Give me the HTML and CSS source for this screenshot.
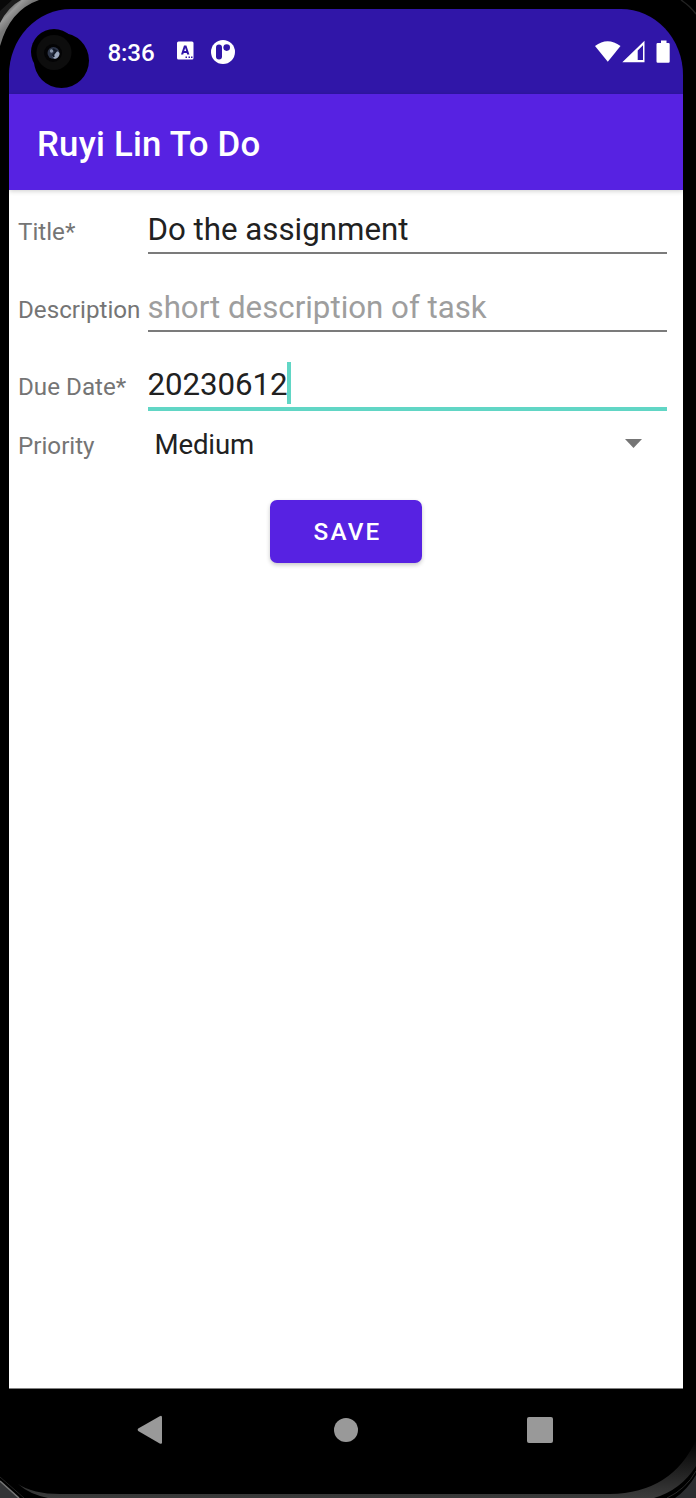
FILE: index.html
```html
<!DOCTYPE html>
<html lang="en">
<head>
<meta charset="utf-8">
<title>Ruyi Lin To Do</title>
<link rel="stylesheet" href="styles.css">
</head>
<body>
<div class="device">
  <svg class="bezel" width="696" height="1498" viewBox="0 0 696 1498" fill="none">
    <defs>
      <linearGradient id="edge" gradientUnits="userSpaceOnUse" x1="7" y1="7" x2="17" y2="17"><stop offset="0" stop-color="#555"/><stop offset=".45" stop-color="#999"/><stop offset="1" stop-color="#777"/></linearGradient>
      <linearGradient id="lip" x1="0" y1="0" x2="0" y2="1"><stop offset="0" stop-color="#000"/><stop offset="1" stop-color="#3c3c3c"/></linearGradient>
    </defs>
    <path d="M0 0H39Q10 10 0 46Z" fill="url(#edge)"/>
    <path d="M0 0H21Q8 7 0 23Z" fill="#1c1c1c"/>
    <path d="M0 0H12L0 11Z" fill="#080808"/>
    <path d="M681 0Q690 6 696 14" stroke="#222" stroke-width="1.5"/>
    <path d="M0 1481L19 1498H0Z" fill="#333436"/>
    <path d="M0 1481L19 1498" stroke="#777" stroke-width="1.5"/>
    <path d="M0 1477L24 1498" stroke="#222" stroke-width="1"/>
    <path d="M18 1484Q33 1494 60 1494H610Q672 1493 696 1440V1466Q681 1490 654 1498H48Q29 1494 18 1484Z" fill="url(#lip)"/>
    <path d="M696 1475Q687 1490 675 1498H696Z" fill="#2c2d30"/>
    <path d="M696 1471Q686 1489 667 1498" stroke="#2a2a2a" stroke-width="1"/>
  </svg>
  <main class="screen">
    <div class="statusbar">
      <svg class="camera" width="60" height="60" viewBox="0 0 60 60">
        <circle cx="31.500" cy="31.500" r="27.500"/><circle cx="24" cy="23" r="23"/>
        <circle cx="24" cy="23.500" r="17.500" fill="#0d0d0d"/><circle cx="23" cy="24" r="9" fill="#040405"/>
        <circle cx="23.500" cy="24" r="6" fill="#2d3548"/><ellipse cx="26" cy="26" rx="3" ry="4" transform="rotate(35 26 26)" fill="#9ba8bd"/><circle cx="21.500" cy="22" r="1.700" fill="#8793a8"/><path d="M23 20l3 2-3 4 1 2" stroke="#111827" stroke-width="2" fill="none"/>
      </svg>
      <span class="clock">8:36</span>
      <svg class="keyboard" width="17" height="19" viewBox="0 0 17 19"><rect y=".5" width="16.500" height="18" rx="1.500" fill="#fff"/><path fill-rule="evenodd" d="M4 13.500L7 4.500H9.400L12.400 13.500H10.200L9.700 11.900H6.700L6.200 13.500ZM7.200 10.100H9.200L8.200 6.900Z" fill="#3016a8"/><path d="M8.500 15.500h1.500v1.500h-1.500zM11.500 15.500h1.500v1.500h-1.500zM14 15.500h1.500v1.500h-1.500z" fill="#3016a8"/></svg>
      <svg class="app" width="24" height="24" viewBox="0 0 24 24"><circle cx="12" cy="12" r="12" fill="#fff"/><rect x="5" y="4.500" width="6" height="15" rx="3" fill="#3016a8"/><circle cx="15.700" cy="7.600" r="3.300" fill="#3016a8"/></svg>
      <svg class="system" width="76" height="24" viewBox="0 0 76 24" fill="#fff"><path d="M0 6Q12.500-3.500 25.500 6L12.800 21.800Z"/><path fill-rule="evenodd" d="M49.500.7V22.200H27.300ZM48 5.200L42.700 10.500V20H48Z"/><path d="M66 .5h5.500V3H73.500Q74.700 3 74.700 4.200V21.500Q74.700 22.800 73.500 22.800H62.700Q61.500 22.800 61.500 21.500V4.200Q61.500 3 62.700 3H66Z"/></svg>
    </div>
    <header class="appbar">Ruyi Lin To Do</header>
    <form class="form">
      <div class="row"><label class="label">Title*</label><div class="field">Do the assignment</div></div>
      <div class="row"><label class="label">Description</label><div class="field hint">short description of task</div></div>
      <div class="row"><label class="label">Due Date*</label><div class="field active">20230612<span class="caret"></span></div></div>
      <div class="row priority"><label class="label">Priority</label><div class="select">Medium<svg width="17" height="9" viewBox="0 0 17 9"><path d="M0 0H17L8.500 9Z" fill="#757575"/></svg></div></div>
      <button class="save" type="button">SAVE</button>
    </form>
  </main>
  <nav class="navbar">
    <svg width="26" height="30" viewBox="0 0 26 30"><path d="M1.200 13.600L22.700 1.200Q25 0 25 2.300V27.300Q25 29.600 22.700 28.400L1.200 16Q0 14.800 1.200 13.600Z" fill="#999"/></svg>
    <svg class="home" width="24" height="24" viewBox="0 0 24 24"><circle cx="12" cy="12" r="12" fill="#999"/></svg>
    <svg width="26" height="26" viewBox="0 0 26 26"><rect width="26" height="26" rx="2" fill="#999"/></svg>
  </nav>
</div>
</body>
</html>
```
FILE: styles.css
```css
* { box-sizing: border-box; }
body { margin: 0; background: #000; font-family: Roboto, sans-serif; }
.device { position: relative; width: 696px; height: 1498px; padding: 9px 13px 0 9px; background: #000; overflow: hidden; }
.bezel { position: absolute; left: 0; top: 0; }
.screen { position: relative; height: 1380px; background: linear-gradient(transparent 85px, #fff 85px); border-bottom: 1px solid #808080; }
.statusbar { display: flex; height: 85px; padding: 20px 12.500px 0 22px; background: #3016a8; border-radius: 62px 62px 0 0 / 66px 66px 0 0; color: #fff; }
.camera { flex: none; margin-left: -1px; }
.clock { margin: 9px 0 0 17.500px; width: 69px; font-size: 24.200px; line-height: 30px; font-weight: 500; letter-spacing: -.15px; }
.keyboard { margin-top: 12px; }
.app { margin: 11px 0 0 17.500px; }
.system { margin: 11px 0 0 auto; }
.appbar { position: relative; height: 96px; padding-left: 28px; background: #5722e2; color: #fff; font-size: 34.800px; line-height: 101px; font-weight: 500; letter-spacing: .22px; box-shadow: 0 1px 5px rgba(0,0,0,.2); }
.form { padding: 19px 16px 0 9px; }
.row { display: grid; grid-template-columns: 129.500px 1fr; height: 77.500px; }
.label { padding-top: 8px; font-size: 24.200px; line-height: 30px; color: #757575; white-space: nowrap; }
.field { height: 45px; border-bottom: 2px solid #7b7b7b; font-size: 31.250px; line-height: 42px; color: #212121; white-space: nowrap; }
.hint { color: #9e9e9e; }
.active { display: flex; height: 47px; border-bottom: 4px solid #61d6c5; letter-spacing: -.08px; }
.caret { width: 4px; height: 42px; margin: -2px 0 0 -.5px; background: #61d6c5; }
.priority { height: 58px; margin-top: -19px; }
.select { display: flex; justify-content: space-between; padding: 4px 25.500px 0 7px; font-size: 27.600px; line-height: 36px; color: #212121; letter-spacing: -.15px; }
.select svg { margin-top: 12px; }
.save { display: block; width: 152px; height: 63px; margin: 19px auto 0 252px; padding: 2px 0 0 3px; border: 0; border-radius: 7px; background: #5722e2; color: #fff; font: 500 24.300px/30px Roboto, sans-serif; letter-spacing: 2.170px; box-shadow: 0 2px 4px rgba(0,0,0,.22); }
.navbar { position: relative; display: flex; justify-content: space-between; align-items: center; padding: 0 130px 0 128px; height: 82px; }
.home { margin-left: 2px; }
```
